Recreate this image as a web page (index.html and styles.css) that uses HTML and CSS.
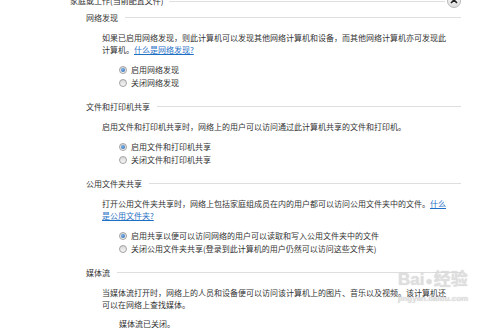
FILE: index.html
```html
<!DOCTYPE html>
<html lang="zh-CN">
<head>
    <meta charset="UTF-8">
    <title>高级共享设置</title>
    <link rel="stylesheet" href="styles.css">
</head>
<body>
    <div class="panel">
        <div class="group-head">
            <span class="group-title">家庭或工作(当前配置文件)</span>
            <span class="rule"></span>
            <span class="collapse">
                <svg width="8" height="6" viewBox="0 0 8 6"><path d="M1 5 L4 2 L7 5" fill="none" stroke="#222" stroke-width="1.6"/></svg>
            </span>
        </div>

        <!-- 网络发现 -->
        <section class="sec">
            <div class="sec-head"><span>网络发现</span><span class="rule"></span></div>
            <p class="desc">如果已启用网络发现，则此计算机可以发现其他网络计算机和设备，而其他网络计算机亦可发现此<br>计算机。<a href="#">什么是网络发现?</a></p>
            <div class="opts">
                <label class="opt"><span class="radio on"></span>启用网络发现</label>
                <label class="opt"><span class="radio"></span>关闭网络发现</label>
            </div>
        </section>

        <!-- 文件和打印机共享 -->
        <section class="sec">
            <div class="sec-head"><span>文件和打印机共享</span><span class="rule"></span></div>
            <p class="desc">启用文件和打印机共享时，网络上的用户可以访问通过此计算机共享的文件和打印机。</p>
            <div class="opts">
                <label class="opt"><span class="radio on"></span>启用文件和打印机共享</label>
                <label class="opt"><span class="radio"></span>关闭文件和打印机共享</label>
            </div>
        </section>

        <!-- 公用文件夹共享 -->
        <section class="sec">
            <div class="sec-head"><span>公用文件夹共享</span><span class="rule"></span></div>
            <p class="desc">打开公用文件夹共享时，网络上包括家庭组成员在内的用户都可以访问公用文件夹中的文件。<a href="#">什么<br>是公用文件夹?</a></p>
            <div class="opts">
                <label class="opt"><span class="radio on"></span>启用共享以便可以访问网络的用户可以读取和写入公用文件夹中的文件</label>
                <label class="opt"><span class="radio"></span>关闭公用文件夹共享(登录到此计算机的用户仍然可以访问这些文件夹)</label>
            </div>
        </section>

        <!-- 媒体流 -->
        <section class="sec">
            <div class="sec-head"><span>媒体流</span><span class="rule"></span></div>
            <p class="desc">当媒体流打开时，网络上的人员和设备便可以访问该计算机上的图片、音乐以及视频。该计算机还<br>可以在网络上查找媒体。</p>
            <p class="state">媒体流已关闭。</p>
        </section>
    </div>

    <div class="watermark">
        <div class="wm-logo">Bai<span class="paw">&#9679;</span>经验</div>
        <div class="wm-url">jingyan.baidu.com</div>
    </div>
</body>
</html>
```

FILE: styles.css
```css
/* Page */
body {
    margin: 0;
    background: #fff;
    font-family: "Noto Sans CJK SC", "Liberation Sans", sans-serif;
    font-size: 8px;
    line-height: 12px;
    color: #333;
    overflow: hidden;
    height: 328px;
    position: relative;
}

.panel {
    width: 391px;
    margin-left: 70px;
}

/* Group header (clipped at the top) */
.group-head {
    display: flex;
    align-items: center;
    height: 12px;
    margin-top: -5px;
    margin-bottom: 5px;
}

.group-title {
    color: #2b2b2b;
    white-space: nowrap;
}

.group-head .rule {
    margin: 0 2px 0 6px;
}

.collapse {
    width: 12px;
    height: 12px;
    border: 1px solid #b8b8b8;
    border-radius: 50%;
    background: linear-gradient(#fafafa, #dedede);
    display: flex;
    align-items: center;
    justify-content: center;
}

.rule {
    flex: 1;
    height: 1px;
    background: #dedede;
}

/* Sections */
.sec {
    margin-left: 16px;
    margin-bottom: 12px;
}

.sec-head {
    display: flex;
    align-items: center;
    height: 11px;
    line-height: 11px;
    white-space: nowrap;
}

.sec-head .rule {
    margin-left: 7px;
}

.desc {
    margin: 9px 0 0 16px;
}

.desc a {
    color: #1f6fc5;
    text-decoration: underline;
}

.opts {
    margin: 7px 0 0 33px;
}

.opt {
    display: flex;
    align-items: center;
    height: 13px;
    white-space: nowrap;
}

.radio {
    width: 6px;
    height: 6px;
    margin-right: 4px;
    border: 1px solid #a2a2a2;
    border-radius: 50%;
    background: linear-gradient(#d9d9d9, #f7f7f7);
    display: flex;
    align-items: center;
    justify-content: center;
}

.radio.on::after {
    content: '';
    width: 4px;
    height: 4px;
    border-radius: 50%;
    background: radial-gradient(circle at 40% 35%, #7fb6ec, #1f5fa8);
}

.state {
    margin: 7px 0 0 33px;
}

/* Watermark */
.watermark {
    position: absolute;
    left: 398px;
    top: 270px;
    color: rgba(225, 225, 225, 0.85);
    text-shadow: 0 0 1px rgba(160, 160, 160, 0.5);
    font-family: "Liberation Sans", "Noto Sans CJK SC", sans-serif;
}

.wm-logo {
    font-size: 17px;
    line-height: 20px;
    font-weight: bold;
    white-space: nowrap;
}

.paw {
    font-size: 12px;
    margin: 0 1px;
}

.wm-url {
    font-size: 8px;
    line-height: 10px;
    margin-top: 3px;
    font-weight: bold;
}
```
